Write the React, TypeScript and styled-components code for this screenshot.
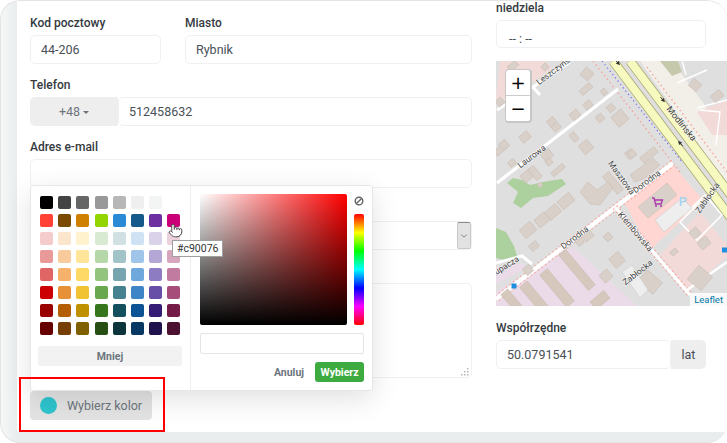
import React from "react";
import styled, { createGlobalStyle } from "styled-components";
import { ChevronDown, Pointer } from "lucide-react";

const GlobalStyle = createGlobalStyle`
    html, body {
        margin: 0;
        background: #fff;
        font-family: Roboto, "Liberation Sans", sans-serif;
    }
`;

const Frame = styled.div`
    position: relative;
    display: flex;
    box-sizing: border-box;
    width: 727px;
    height: 443px;
    padding: 0 0 10px 16px;
    background: linear-gradient(to right, #f6f7f7, #e9edee 16px);
    border: 1px solid #e3e5e5;
    border-right: 0;
    border-radius: 20px;
    overflow: hidden;
`;

const Panel = styled.div`
    flex: 1;
    display: grid;
    grid-template-columns: 442px 210px;
    column-gap: 24px;
    padding-left: 13px;
    background: #fff;
    overflow: hidden;
`;

const LeftColumn = styled.div`
    display: flex;
    flex-direction: column;
    gap: 12px;
    padding-top: 13px;
`;

const RightColumn = styled.div`
    display: flex;
    flex-direction: column;
    margin-top: -2px;
`;

const Row = styled.div`
    display: flex;
    gap: 24px;
`;

const Field = styled.div`
    display: flex;
    flex-direction: column;
`;

const PostcodeField = styled(Field)`
    flex: 0 0 131px;
`;

const CityField = styled(Field)`
    flex: 1;
`;

const Label = styled.div`
    height: 18px;
    margin-bottom: 3px;
    font-size: 12px;
    font-weight: 500;
    line-height: 18px;
    color: #343a40;
`;

const Input = styled.div<{ $grow?: boolean }>`
    display: flex;
    align-items: center;
    box-sizing: border-box;
    flex: ${p => (p.$grow ? "1" : "none")};
    height: 29px;
    padding: 0 10px;
    font-size: 12.5px;
    color: #495057;
    background: #fff;
    border: 1px solid #eef0f2;
    border-radius: 5px;
`;

const Group = styled.div`
    display: flex;
`;

const PhonePrefix = styled.div`
    display: flex;
    align-items: center;
    justify-content: center;
    gap: 3px;
    width: 88px;
    height: 29px;
    font-size: 12.5px;
    color: #6c757d;
    background: #eee;
    border-radius: 5px 0 0 5px;
`;

const Caret = styled.span`
    margin-top: 2px;
    border-top: 3px solid #6c757d;
    border-left: 3px solid transparent;
    border-right: 3px solid transparent;
`;

const SelectBox = styled(Input)`
    justify-content: flex-end;
    padding: 0;
`;

const SelectArrow = styled.div`
    display: flex;
    align-items: center;
    justify-content: center;
    box-sizing: border-box;
    width: 14px;
    height: 27px;
    color: #6c757d;
    background: #e2e2e2;
    border: 1px solid #c9c9c9;
    border-top-color: #8a8a8a;
    border-radius: 2px;
`;

const TextArea = styled.div`
    display: flex;
    align-items: flex-end;
    justify-content: flex-end;
    box-sizing: border-box;
    height: 95px;
    padding: 1px 2px;
    background: #fff;
    border: 1px solid #eef0f2;
    border-radius: 5px;
`;

const ColorButton = styled.div`
    display: flex;
    align-items: center;
    gap: 10px;
    box-sizing: border-box;
    width: 122px;
    height: 29px;
    margin-top: 1px;
    padding-left: 10px;
    font-size: 12.5px;
    color: #6c757d;
    background: #e3e3e3;
    border-radius: 4px;
`;

const ColorDot = styled.span`
    width: 17px;
    height: 17px;
    background: #2ec5ce;
    border-radius: 50%;
`;

const TimeInput = styled(Input)`
    align-items: flex-end;
    height: 28px;
    padding: 0 0 1px 12px;
    margin-bottom: 13px;
`;

const AddOn = styled.div`
    display: flex;
    align-items: center;
    justify-content: center;
    width: 35px;
    font-size: 12.5px;
    color: #495057;
    background: #eee;
    border-radius: 0 5px 5px 0;
`;

const MapBox = styled.div`
    position: relative;
    width: 231px;
    height: 245px;
    margin-bottom: 13px;
    overflow: hidden;
    background: #e0dfdf;
`;

const MapSvg = styled.svg`
    display: block;
`;

const ZoomControl = styled.div`
    position: absolute;
    top: 8px;
    left: 9px;
    display: flex;
    flex-direction: column;
    width: 24px;
    background: #fff;
    border: 1px solid #c6c6c6;
    border-bottom-width: 2px;
    border-right-width: 2px;
    border-radius: 4px;
`;

const ZoomButton = styled.div`
    display: flex;
    align-items: center;
    justify-content: center;
    height: 25px;
    font-family: "DejaVu Sans", sans-serif;
    font-size: 18px;
    color: #000;

    &:first-child {
        border-bottom: 1px solid #ccc;
    }
`;

const Attribution = styled.div`
    position: absolute;
    right: 0;
    bottom: 0;
    padding: 0 4px;
    font-size: 9.5px;
    line-height: 13px;
    color: #0078a8;
    background: rgba(255, 255, 255, 0.8);
`;

const Popover = styled.div`
    position: absolute;
    top: 184px;
    left: 29px;
    display: flex;
    box-sizing: border-box;
    width: 343px;
    height: 206px;
    background: #fff;
    border: 1px solid #e6e6e6;
    border-radius: 3px;
    box-shadow: 0 8px 28px rgba(0, 0, 0, 0.12);
`;

const PalettePane = styled.div`
    display: flex;
    flex-direction: column;
    box-sizing: border-box;
    width: 160px;
    padding: 10px 8px 0 7px;
    border-right: 1px solid #eee;
`;

const Palette = styled.div`
    display: grid;
    grid-template-columns: repeat(8, 13px);
    grid-auto-rows: 13px;
    column-gap: 5.2px;
    row-gap: 5px;
    margin: 0 2px 11px;
`;

const Swatch = styled.span<{ $color: string }>`
    background: ${p => p.$color};
    border-radius: 2px;
`;

const LessButton = styled.div`
    display: flex;
    align-items: center;
    justify-content: center;
    height: 20px;
    font-size: 10.5px;
    font-weight: 700;
    color: #6c757d;
    background: #f2f2f2;
    border-radius: 3px;
`;

const PickerPane = styled.div`
    flex: 1;
    display: flex;
    flex-direction: column;
    padding: 8px 8px 0 9px;
`;

const PickerTop = styled.div`
    display: flex;
    justify-content: space-between;
    height: 131px;
    margin-bottom: 8px;
`;

const Saturation = styled.div`
    width: 147px;
    background: linear-gradient(to top, #000, rgba(0, 0, 0, 0)),
        linear-gradient(to right, #fff, #f00);
    border-radius: 2px;
`;

const HueColumn = styled.div`
    display: flex;
    flex-direction: column;
    align-items: center;
    gap: 8px;
    width: 10px;
`;

const HueBar = styled.div`
    flex: 1;
    width: 10px;
    background: linear-gradient(to bottom, #f00, #ff0, #0f0, #0ff, #00f, #f0f, #f00);
    border-radius: 2px;
`;

const HexInput = styled.div`
    box-sizing: border-box;
    height: 21px;
    margin-bottom: 8px;
    background: #fff;
    border: 1px solid #e4e4e4;
    border-radius: 2px;
`;

const Actions = styled.div`
    display: flex;
    align-items: center;
    justify-content: flex-end;
    gap: 11px;
`;

const CancelButton = styled.span`
    font-size: 10.5px;
    font-weight: 700;
    color: #6c757d;
`;

const ConfirmButton = styled.span`
    display: flex;
    align-items: center;
    justify-content: center;
    width: 49px;
    height: 20px;
    font-size: 10.5px;
    font-weight: 700;
    color: #fff;
    background: #3dab3f;
    border-radius: 3px;
`;

const Tooltip = styled.div`
    position: absolute;
    top: 239px;
    left: 171px;
    padding: 0 4px;
    font-size: 10.5px;
    line-height: 15px;
    color: #333;
    background: #fff;
    border: 1px solid #a0a0a0;
`;

const HandCursor = styled.div`
    position: absolute;
    top: 222px;
    left: 167px;
    display: flex;
    color: #444;
`;

const Highlight = styled.div`
    position: absolute;
    top: 376px;
    left: 18px;
    box-sizing: border-box;
    width: 146px;
    height: 55px;
    border: 2px solid #f00;
`;

const COLORS = [
    ["#000000", "#434343", "#666666", "#999999", "#b7b7b7", "#efefef", "#f3f5f5", "#ffffff"],
    ["#ff4136", "#7a4a00", "#d08000", "#93d500", "#2b8ad6", "#14598a", "#6e30a0", "#c90076"],
    ["#f4cccc", "#fce5cd", "#fff2cc", "#d9ead3", "#d0e0e3", "#cfe2f3", "#d9d2e9", "#ead1dc"],
    ["#ea9999", "#f9cb9c", "#ffe599", "#b6d7a8", "#a2c4c9", "#9fc5e8", "#b4a7d6", "#d5a6bd"],
    ["#e06666", "#f6b26b", "#ffd966", "#93c47d", "#76a5af", "#6fa8dc", "#8e7cc3", "#c27ba0"],
    ["#cc0000", "#e69138", "#f1c232", "#6aa84f", "#45818e", "#3d85c6", "#674ea7", "#a64d79"],
    ["#990000", "#b45f06", "#bf9000", "#38761d", "#134f5c", "#0b5394", "#351c75", "#741b47"],
    ["#660000", "#783f04", "#7f6000", "#274e13", "#0c343d", "#073763", "#20124d", "#4c1130"],
];

// cx, cy, w, h, angle (page coordinates, the svg viewBox starts at 496 61)
const BUILDINGS = [
    [587, 74, 10, 10, 40], [586, 89, 13, 6, -40], [604, 92, 5, 6, -40], [588, 105, 8, 7, -40],
    [611, 108, 7, 7, -40], [620, 118, 13, 13, -40], [600, 118, 7, 7, -40], [575, 115, 9, 8, -40],
    [552, 122, 8, 8, -40], [556, 127, 8, 7, -40], [574, 137, 6, 9, -40], [586, 147, 11, 11, -40],
    [525, 137, 10, 8, -40], [500, 150, 12, 6, -40], [504, 145, 8, 8, -40], [547, 155, 10, 9, -40],
    [630, 154, 8, 8, -40], [649, 155, 18, 7, -38], [545, 67, 6, 6, -40], [500, 102, 7, 7, -40],
    [512, 163, 7, 6, -40], [527, 176, 11, 9, -40], [535, 173, 7, 14, -40], [558, 170, 15, 5, -40],
    [549, 162, 6, 6, -40], [540, 185, 4, 4, -40], [632, 154, 7, 7, -40], [613, 183, 23, 8, 50],
    [566, 201, 15, 10, -40], [553, 212, 14, 10, -40], [542, 220, 13, 10, -40], [528, 230, 14, 11, -40],
    [534, 246, 9, 7, -40], [588, 236, 10, 7, -40], [580, 242, 7, 6, -40], [608, 237, 7, 7, -40],
    [617, 260, 12, 12, -40], [606, 276, 10, 10, -40], [650, 282, 20, 15, 40], [695, 85, 10, 9, 40],
    [717, 96, 11, 8, -40], [695, 233, 9, 9, -40], [704, 243, 11, 9, -40], [674, 252, 7, 5, -40],
    [700, 278, 18, 18, 40], [513, 66, 10, 6, -40], [528, 270, 8, 8, -40],
];

const PURPLE_BUILDINGS = [
    [577, 270, 9, 46, -40], [557, 288, 10, 42, -40], [535, 298, 10, 36, -40], [512, 301, 9, 24, -40],
    [600, 300, 18, 10, -40],
];

const ROAD_ARROWS = [
    [618, 63, 230], [663, 100, 230], [680, 143, 50],
];

const Building = ({ b, color }: { b: number[]; color: string }) => (
    <rect
        x={b[0] - b[2] / 2}
        y={b[1] - b[3] / 2}
        width={b[2]}
        height={b[3]}
        fill={color}
        stroke="#c9bdb3"
        strokeWidth="0.6"
        transform={`rotate(${b[4]} ${b[0]} ${b[1]})`}
    />
);

const StreetLabel = ({ x, y, angle, size = 8.5, children }: { x: number; y: number; angle: number; size?: number; children: string }) => (
    <text
        x={x}
        y={y}
        fontFamily="Roboto, sans-serif"
        fontSize={size}
        fill="#444"
        stroke="#fff"
        strokeOpacity="0.7"
        strokeWidth="1.2"
        paintOrder="stroke"
        textAnchor="middle"
        dominantBaseline="middle"
        transform={`rotate(${angle} ${x} ${y})`}
    >
        {children}
    </text>
);

const OsmMap = () => (
    <MapSvg width="231" height="245" viewBox="496 61 231 245">
        {/* land use */}
        <polygon points="640,61 672,61 727,135 727,185" fill="#f2efe9" />
        <polygon points="697,112 727,100 727,135 712,135" fill="#f2dad9" />
        <polygon points="623,200 673,165 703,200 650,250" fill="#ffd6d1" />
        <polygon points="660,255 700,212 727,245 727,256 688,292" fill="#f2dad9" />
        <polygon points="500,61 545,61 552,68 510,100 496,100" fill="#f2dad9" />
        <polygon points="496,306 496,291 573,247 637,306" fill="#ebdbe8" />
        <polygon points="496,267 523,263 526,268 496,284" fill="#ebdbe8" />
        <path
            d="M507 183 L518 192 L513 203 L521 208 L533 198 L548 196 L566 184 L562 179 L548 181 L530 185 L522 180 L513 178 Z"
            fill="#add19e"
        />
        <path d="M496 228 L506 232 L514 246 L517 256 L510 262 L496 258 Z" fill="#add19e" />

        {/* roads */}
        <polyline points="593,61 680,172" fill="none" stroke="#f6a39b" strokeWidth="1.4" strokeDasharray="1.5 3" />
        <polyline points="602,61 683,163" fill="none" stroke="#6a6af0" strokeWidth="1.2" strokeDasharray="1.2 3" />
        <polyline points="647,67 727,172" fill="none" stroke="#f6a39b" strokeWidth="1.4" strokeDasharray="1.5 3" />
        <line x1="613" y1="61" x2="740" y2="230" stroke="#a3a36a" strokeWidth="9.5" />
        <line x1="613" y1="61" x2="740" y2="230" stroke="#f7fabf" strokeWidth="8" />
        <line x1="630" y1="61" x2="760" y2="234" stroke="#a3a36a" strokeWidth="9.5" />
        <line x1="630" y1="61" x2="760" y2="234" stroke="#f7fabf" strokeWidth="8" />
        {ROAD_ARROWS.map((a, i) => (
            <path key={i} d="M-3 0 L1 -2 L1 2 Z M0 -0.4 H4 V0.4 H0 Z" fill="#333" transform={`translate(${a[0]} ${a[1]}) rotate(${a[2]})`} />
        ))}
        <polyline points="618,89 497,183" fill="none" stroke="#fff" strokeWidth="3.2" />
        <polyline points="533,87 570,62" fill="none" stroke="#fff" strokeWidth="3" />
        <polyline points="497,110 533,87 540,95" fill="none" stroke="#fff" strokeWidth="3" />
        <polyline points="673,163 496,299" fill="none" stroke="#f5a79e" strokeWidth="7" strokeDasharray="1.5 3" />
        <polyline points="673,163 496,299" fill="none" stroke="#fff" strokeWidth="4.4" />
        <polyline points="615,207 690,295" fill="none" stroke="#f5a79e" strokeWidth="6" strokeDasharray="1.5 3" />
        <polyline points="615,207 690,295" fill="none" stroke="#fff" strokeWidth="3.4" />
        <polyline points="496,263 522,256 532,264" fill="none" stroke="#fff" strokeWidth="3" />
        <polyline points="677,83 707,70" fill="none" stroke="#fff" strokeWidth="1.4" />
        <polyline points="682,60 686,75" fill="none" stroke="#fff" strokeWidth="1.4" />
        <polyline points="697,108 727,100" fill="none" stroke="#fff" strokeWidth="1.4" />
        <polyline points="700,110 720,112 716,145" fill="none" stroke="#fff" strokeWidth="1.4" />
        <polyline points="684,215 705,195 722,215 697,240 680,222 702,200" fill="none" stroke="#fff" strokeWidth="1.6" />
        <polyline points="687,290 727,262" fill="none" stroke="#fff" strokeWidth="2.4" />

        {/* buildings */}
        {BUILDINGS.map((b, i) => (
            <Building key={i} b={b} color="#d9d0c9" />
        ))}
        {PURPLE_BUILDINGS.map((b, i) => (
            <Building key={i} b={b} color="#d6c8bc" />
        ))}
        <polygon points="630,175 653,158 660,165 645,178 635,182" fill="#d9d0c9" stroke="#c9bdb3" strokeWidth="0.6" />
        <polygon points="580,192 588,182 597,190 608,182 613,188 600,205 590,204" fill="#d9d0c9" stroke="#c9bdb3" strokeWidth="0.6" />
        <polygon points="638,207 667,183 677,195 648,218" fill="#d9d0c9" stroke="#c9bdb3" strokeWidth="0.6" />
        <polygon points="655,220 682,198 692,208 664,232" fill="#eeeeee" stroke="#c9c9c9" strokeWidth="0.6" />
        <polygon points="622,272 632,265 648,290 640,298" fill="#eeeeee" stroke="#c9c9c9" strokeWidth="0.6" />
        <polygon points="660,61 678,61 682,72 672,76" fill="#c7c9ad" />

        {/* icons */}
        <path d="M652 198 h2 l1.5 6 h5.5 l1.5 -4 h-8" fill="none" stroke="#ac39ac" strokeWidth="1.4" />
        <circle cx="656" cy="206" r="1" fill="#ac39ac" />
        <circle cx="661" cy="206" r="1" fill="#ac39ac" />
        <text x="683" y="203" fontFamily="Roboto, sans-serif" fontSize="13" fontWeight="500" fill="#a5d3ee" textAnchor="middle" dominantBaseline="middle">
            P
        </text>
        <rect x="511.5" y="283.5" width="5" height="5" fill="#1e8fe0" />
        <rect x="722" y="247.5" width="5" height="5" fill="#1e8fe0" />

        {/* street names */}
        <StreetLabel x={681} y={124} angle={51} size={9}>Modlińska</StreetLabel>
        <StreetLabel x={647} y={182} angle={-37}>Dorodna</StreetLabel>
        <StreetLabel x={575} y={238} angle={-37}>Dorodna</StreetLabel>
        <StreetLabel x={621} y={178} angle={54}>Masztowa</StreetLabel>
        <StreetLabel x={635} y={232} angle={50}>Klembowska</StreetLabel>
        <StreetLabel x={638} y={273} angle={-38}>Zabłocka</StreetLabel>
        <StreetLabel x={708} y={198} angle={-55}>Zabłocka</StreetLabel>
        <StreetLabel x={532} y={157} angle={-37}>Laurowa</StreetLabel>
        <StreetLabel x={557} y={69} angle={-37}>Leszczyńska</StreetLabel>
        <StreetLabel x={505} y={267} angle={-32}>Łupacza</StreetLabel>
    </MapSvg>
);

export default function App() {
    return (
        <>
            <GlobalStyle />
            <Frame>
                <Panel>
                    <LeftColumn>
                        <Row>
                            <PostcodeField>
                                <Label>Kod pocztowy</Label>
                                <Input>44-206</Input>
                            </PostcodeField>
                            <CityField>
                                <Label>Miasto</Label>
                                <Input>Rybnik</Input>
                            </CityField>
                        </Row>
                        <Field>
                            <Label>Telefon</Label>
                            <Group>
                                <PhonePrefix>
                                    +48 <Caret />
                                </PhonePrefix>
                                <Input $grow>512458632</Input>
                            </Group>
                        </Field>
                        <Field>
                            <Label>Adres e-mail</Label>
                            <Input />
                        </Field>
                        <Field>
                            <Label />
                            <SelectBox>
                                <SelectArrow>
                                    <ChevronDown size={10} strokeWidth={2} />
                                </SelectArrow>
                            </SelectBox>
                        </Field>
                        <Field>
                            <Label />
                            <TextArea>
                                <svg width="8" height="8" viewBox="0 0 8 8">
                                    <path d="M6 0h1.5v1.5H6zM3 3h1.5v1.5H3zM6 3h1.5v1.5H6zM0 6h1.5v1.5H0zM3 6h1.5v1.5H3zM6 6h1.5v1.5H6z" fill="#b5b5b5" />
                                </svg>
                            </TextArea>
                        </Field>
                        <ColorButton>
                            <ColorDot />
                            Wybierz kolor
                        </ColorButton>
                    </LeftColumn>
                    <RightColumn>
                        <Label>niedziela</Label>
                        <TimeInput>-- : --</TimeInput>
                        <MapBox>
                            <OsmMap />
                            <ZoomControl>
                                <ZoomButton>+</ZoomButton>
                                <ZoomButton>−</ZoomButton>
                            </ZoomControl>
                            <Attribution>Leaflet</Attribution>
                        </MapBox>
                        <Label>Współrzędne</Label>
                        <Group>
                            <Input $grow>50.0791541</Input>
                            <AddOn>lat</AddOn>
                        </Group>
                    </RightColumn>
                </Panel>
                <Popover>
                    <PalettePane>
                        <Palette>
                            {COLORS.flat().map((color, i) => (
                                <Swatch key={i} $color={color} />
                            ))}
                        </Palette>
                        <LessButton>Mniej</LessButton>
                    </PalettePane>
                    <PickerPane>
                        <PickerTop>
                            <Saturation />
                            <HueColumn>
                                <svg width="10" height="12" viewBox="0 0 10 12">
                                    <circle cx="5" cy="7" r="3.8" fill="none" stroke="#666" strokeWidth="1.4" />
                                    <line x1="2.4" y1="9.6" x2="7.6" y2="4.4" stroke="#666" strokeWidth="1.4" />
                                </svg>
                                <HueBar />
                            </HueColumn>
                        </PickerTop>
                        <HexInput />
                        <Actions>
                            <CancelButton>Anuluj</CancelButton>
                            <ConfirmButton>Wybierz</ConfirmButton>
                        </Actions>
                    </PickerPane>
                </Popover>
                <HandCursor>
                    <Pointer size={15} fill="#fff" strokeWidth={1.5} />
                </HandCursor>
                <Tooltip>#c90076</Tooltip>
                <Highlight />
            </Frame>
        </>
    );
}
